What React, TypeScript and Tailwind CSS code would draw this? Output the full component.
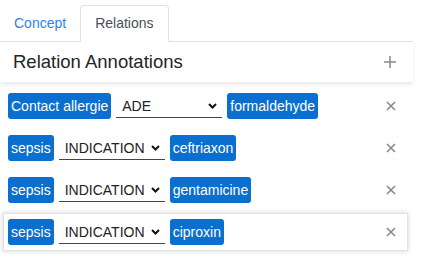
import { useState } from "react";

type Relation = {
  id: number;
  source: string;
  type: string;
  target: string;
};

const RELATIONS: Relation[] = [
  { id: 1, source: "Contact allergie", type: "ADE", target: "formaldehyde" },
  { id: 2, source: "sepsis", type: "INDICATION", target: "ceftriaxon" },
  { id: 3, source: "sepsis", type: "INDICATION", target: "gentamicine" },
  { id: 4, source: "sepsis", type: "INDICATION", target: "ciproxin" },
];

const TYPES = ["ADE", "INDICATION"];

function Chip({ label }: { label: string }) {
  return (
    <span className="h-[26px] px-[3px] rounded-[3px] bg-[#0a6fcf] text-white text-[14px] leading-none flex items-center whitespace-nowrap">
      {label}
    </span>
  );
}

function TypeSelect({ value }: { value: string }) {
  return (
    <div className="w-[106px] h-[24px] mx-[5px] border-b border-[#444] flex items-center pl-[6px] pr-[5px]">
      <select
        defaultValue={value}
        className="flex-1 appearance-none bg-transparent outline-none text-[14px] text-[#222] leading-none"
      >
        {TYPES.map((t) => (
          <option key={t} value={t}>
            {t}
          </option>
        ))}
      </select>
      <svg width="9" height="6" viewBox="0 0 9 6" className="shrink-0">
        <path d="M1 1 L4.5 4.5 L8 1" fill="none" stroke="#111" strokeWidth="2" />
      </svg>
    </div>
  );
}

function App() {
  const [tab, setTab] = useState("relations");
  const [selected] = useState(4);

  return (
    <div className="w-[413px] bg-white font-['Liberation_Sans',Arial,sans-serif]">
      {/* TABS */}
      <div className="flex pt-[5px] border-b border-[#dee2e6]">
        <button
          onClick={() => setTab("concept")}
          className={`h-[37px] -mb-px px-[13px] text-[14px] rounded-t-[4px] border ${tab === "concept" ? "border-[#dee2e6] border-b-white text-[#495057] bg-white" : "border-transparent text-[#2f7ff5]"}`}
        >
          Concept
        </button>
        <button
          onClick={() => setTab("relations")}
          className={`h-[37px] -mb-px px-[14px] text-[14px] rounded-t-[4px] border ${tab === "relations" ? "border-[#dee2e6] border-b-white text-[#495057] bg-white" : "border-transparent text-[#2f7ff5]"}`}
        >
          Relations
        </button>
      </div>

      {/* HEADER */}
      <div className="relative z-10 h-[40px] flex items-center justify-between pl-[13px] pr-[17px] bg-white shadow-[0_3px_4px_rgba(0,0,0,0.08)]">
        <h2 className="text-[18.5px] text-[#212529]">Relation Annotations</h2>
        <svg width="12" height="12" viewBox="0 0 12 12">
          <path d="M6 0 V12 M0 6 H12" stroke="#888" strokeWidth="1.5" />
        </svg>
      </div>

      {/* ROWS */}
      <div className="flex flex-col gap-[4px] pt-[5px] pb-[8px]">
        {RELATIONS.map((rel) => (
          <div
            key={rel.id}
            className={`ml-[3px] w-[405px] h-[38px] flex items-center pl-[4px] pr-[11px] border ${rel.id === selected ? "border-[#e3e3e3] shadow-[0_0_5px_rgba(0,0,0,0.18)]" : "border-transparent"}`}
          >
            <Chip label={rel.source} />
            <TypeSelect value={rel.type} />
            <Chip label={rel.target} />
            <svg width="10" height="10" viewBox="0 0 10 10" className="ml-auto">
              <path d="M1 1 L9 9 M9 1 L1 9" stroke="#888" strokeWidth="1.6" />
            </svg>
          </div>
        ))}
      </div>
    </div>
  );
}

export default App;
